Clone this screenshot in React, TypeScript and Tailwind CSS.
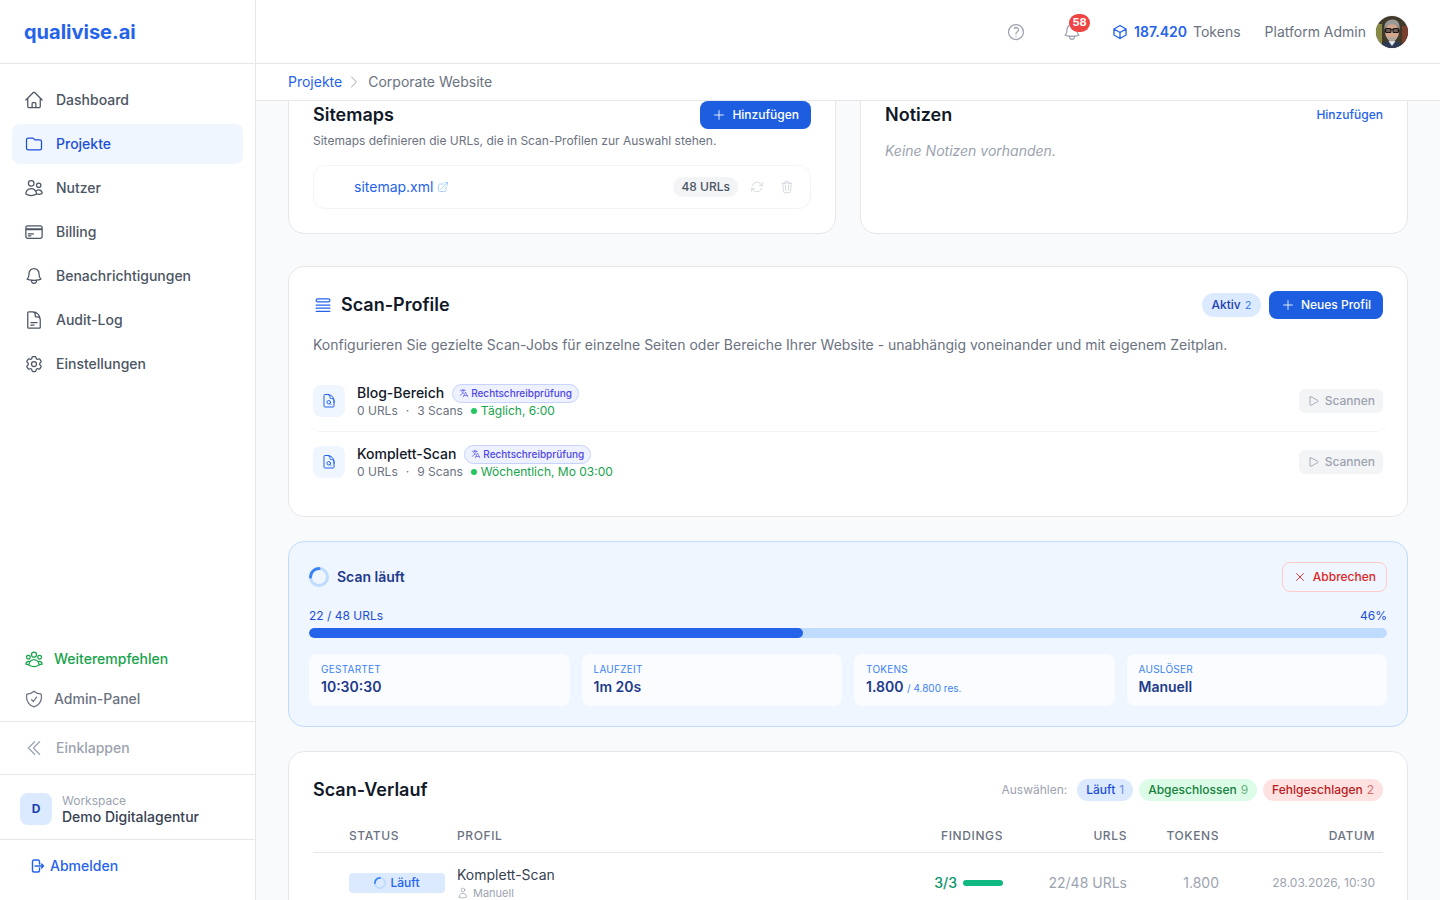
import type { ComponentType, ReactNode } from "react";
import {
  HiOutlineArrowPath,
  HiOutlineArrowRightStartOnRectangle,
  HiOutlineArrowTopRightOnSquare,
  HiOutlineBell,
  HiOutlineChevronDoubleLeft,
  HiOutlineChevronRight,
  HiOutlineCog6Tooth,
  HiOutlineCreditCard,
  HiOutlineCube,
  HiOutlineDocumentMagnifyingGlass,
  HiOutlineDocumentText,
  HiOutlineHome,
  HiOutlineLanguage,
  HiOutlinePlay,
  HiOutlinePlus,
  HiOutlineQuestionMarkCircle,
  HiOutlineQueueList,
  HiOutlineShieldCheck,
  HiOutlineTrash,
  HiOutlineUser,
  HiOutlineUserGroup,
  HiOutlineUsers,
  HiOutlineXMark,
} from "react-icons/hi2";

type NavItem = {
  label: string;
  icon: ComponentType<{ className?: string }>;
  active?: boolean;
};

const FolderIcon = ({ className }: { className?: string }) => (
  <svg viewBox="0 0 24 24" fill="none" stroke="currentColor" strokeWidth="1.5" className={className}>
    <path
      strokeLinecap="round"
      strokeLinejoin="round"
      d="M3 7v10a2 2 0 0 0 2 2h14a2 2 0 0 0 2-2V9a2 2 0 0 0-2-2h-6l-2-2H5a2 2 0 0 0-2 2z"
    />
  </svg>
);

const navItems: NavItem[] = [
  { label: "Dashboard", icon: HiOutlineHome },
  { label: "Projekte", icon: FolderIcon, active: true },
  { label: "Nutzer", icon: HiOutlineUsers },
  { label: "Billing", icon: HiOutlineCreditCard },
  { label: "Benachrichtigungen", icon: HiOutlineBell },
  { label: "Audit-Log", icon: HiOutlineDocumentText },
  { label: "Einstellungen", icon: HiOutlineCog6Tooth },
];

const profiles = [
  { name: "Blog-Bereich", scans: "3 Scans", schedule: "Täglich, 6:00" },
  { name: "Komplett-Scan", scans: "9 Scans", schedule: "Wöchentlich, Mo 03:00" },
];

const Spinner = ({ className }: { className: string }) => (
  <svg viewBox="0 0 20 20" fill="none" className={className}>
    <circle cx="10" cy="10" r="8.5" stroke="#bfdbfe" strokeWidth="3" />
    <path
      d="M1.5 10A8.5 8.5 0 0 1 10 1.5"
      stroke="#3b82f6"
      strokeWidth="3"
      strokeLinecap="round"
    />
  </svg>
);

const Avatar = () => (
  <svg viewBox="0 0 32 32" className="h-8 w-8 rounded-full ring-1 ring-gray-100">
    <rect width="32" height="32" fill="#3f3a2a" />
    <rect x="0" y="8" width="6" height="24" fill="#8a8a48" />
    <rect x="26" y="10" width="6" height="22" fill="#7a3f2c" />
    <path d="M4 32c1-5 6-7 12-7s11 2 12 7z" fill="#2f3a52" />
    <path d="M12.500 25l3.500 5 3.500-5z" fill="#e6ebf2" />
    <ellipse cx="16" cy="16" rx="7" ry="9" fill="#d3a68b" />
    <path d="M8.500 14C7.500 7 11.500 3.500 16.500 3.500S24.500 7 23.500 14c-.8-3.500-3-5.500-7.500-5.500S9.300 10.500 8.500 14z" fill="#9a9a98" />
    <path d="M10.500 20c1 4 3 5.500 5.500 5.500s4.500-1.500 5.500-5.500c-2 1.500-9 1.500-11 0z" fill="#b3a79c" />
    <rect x="9.500" y="12.500" width="5.500" height="4" rx="1" fill="#6b5a50" stroke="#17171c" strokeWidth="1.100" />
    <rect x="17" y="12.500" width="5.500" height="4" rx="1" fill="#6b5a50" stroke="#17171c" strokeWidth="1.100" />
    <path d="M15 13.500h2" stroke="#17171c" strokeWidth="1" />
  </svg>
);

const Card = ({ children }: { children: ReactNode }) => (
  <section className="rounded-2xl border border-[#e5e7eb] bg-white p-6">{children}</section>
);

const PrimaryButton = ({ label }: { label: string }) => (
  <button className="flex h-7 items-center gap-1.5 rounded-lg bg-[#1d5ee0] px-3 text-xs font-medium text-white">
    <HiOutlinePlus className="h-3.5 w-3.5" />
    {label}
  </button>
);

const Stat = ({ label, children }: { label: string; children: ReactNode }) => (
  <div className="rounded-lg bg-white/70 px-3 pb-[9px] pt-[7px]">
    <div className="text-[10px] leading-4 uppercase tracking-[0.025em] text-[#3b82f6]">{label}</div>
    <div className="h-5 text-sm leading-5 font-semibold text-[#1e3a8a]">{children}</div>
  </div>
);

const verlaufGrid = "grid grid-cols-[36px_108px_1fr_100px_124px_92px_164px]";

export default function App() {
  return (
    <div className="flex h-screen w-full overflow-hidden bg-[#f9fafb] font-['Inter',sans-serif] text-[#111827]">
      <aside className="flex w-64 shrink-0 flex-col border-r border-[#e5e7eb] bg-white">
        <div className="flex h-16 shrink-0 items-center border-b border-[#e5e7eb] px-6">
          <span className="text-xl font-bold text-[#2563eb]">qualivise.ai</span>
        </div>

        <nav className="flex flex-1 flex-col gap-1 px-3 py-4">
          {navItems.map((item) => (
            <div
              key={item.label}
              className={
                item.active
                  ? "flex h-10 items-center gap-3 rounded-lg bg-[#eff6ff] px-3 text-sm font-medium text-[#1d4ed8]"
                  : "flex h-10 items-center gap-3 rounded-lg px-3 text-sm font-medium text-[#4b5563]"
              }
            >
              <item.icon className="h-5 w-5" />
              {item.label}
            </div>
          ))}
        </nav>

        <div className="border-b border-[#e5e7eb] px-6 pb-0.5">
          <div className="flex h-10 items-center gap-2.5 text-sm font-medium text-[#16a34a]">
            <HiOutlineUserGroup className="h-5 w-5" />
            Weiterempfehlen
          </div>
          <div className="flex h-10 items-center gap-2.5 text-sm font-medium text-[#6b7280]">
            <HiOutlineShieldCheck className="h-5 w-5" />
            Admin-Panel
          </div>
        </div>
        <div className="flex h-[53px] items-center gap-3 border-b border-[#e5e7eb] px-6 text-sm font-medium text-[#9ca3af]">
          <HiOutlineChevronDoubleLeft className="h-5 w-5" />
          Einklappen
        </div>
        <div className="flex h-[65px] items-center gap-2.5 border-b border-[#e5e7eb] px-5 pt-1">
          <div className="flex h-8 w-8 items-center justify-center rounded-lg bg-[#dbeafe] text-xs font-bold text-[#1e40af]">
            D
          </div>
          <div>
            <div className="text-xs leading-4 text-[#9ca3af]">Workspace</div>
            <div className="text-sm leading-4 font-medium text-[#374151]">Demo Digitalagentur</div>
          </div>
        </div>
        <div className="flex h-[60px] items-center gap-[5px] px-[29px] pb-2 text-sm font-medium text-[#2563eb]">
          <HiOutlineArrowRightStartOnRectangle className="h-4 w-4 stroke-[2.2]" />
          Abmelden
        </div>
      </aside>

      <div className="flex min-w-0 flex-1 flex-col">
        <header className="flex h-16 shrink-0 items-center justify-end border-b border-[#e5e7eb] bg-white px-8">
          <HiOutlineQuestionMarkCircle className="h-5 w-5 text-[#9ca3af]" />
          <div className="relative ml-9 mr-[30px]">
            <HiOutlineBell className="h-5 w-5 text-[#9ca3af]" />
            <span className="absolute -right-[8px] -top-[8px] flex h-[18px] w-[21px] items-center justify-center rounded-full bg-[#ef4444] text-[11px] font-bold text-white">
              58
            </span>
          </div>
          <div className="flex items-center gap-1.5 text-sm">
            <HiOutlineCube className="h-4 w-4 stroke-2 text-[#2563eb]" />
            <span className="font-semibold text-[#2563eb]">187.420</span>
            <span className="text-[#6b7280]">Tokens</span>
          </div>
          <span className="ml-6 text-sm text-[#6b7280]">Platform Admin</span>
          <div className="ml-2.5">
            <Avatar />
          </div>
        </header>

        <div className="relative z-10 flex h-[37px] shrink-0 items-center border-b border-[#e5e7eb] bg-white px-8 text-sm">
          <span className="text-[#2563eb]">Projekte</span>
          <HiOutlineChevronRight className="ml-1 mr-1.5 h-4 w-4 text-[#9ca3af]" />
          <span className="text-[#6b7280]">Corporate Website</span>
        </div>

        <main className="min-h-0 flex-1 overflow-hidden px-8">
          <div className="-mt-[25px] grid grid-cols-2 gap-6">
            <Card>
              <div className="flex items-center justify-between">
                <h2 className="text-lg font-semibold">Sitemaps</h2>
                <PrimaryButton label="Hinzufügen" />
              </div>
              <p className="mt-1 text-xs text-[#6b7280]">
                Sitemaps definieren die URLs, die in Scan-Profilen zur Auswahl stehen.
              </p>
              <div className="mt-4 flex h-11 items-center rounded-xl border border-[#f3f4f6] pl-10 pr-4">
                <span className="text-sm text-[#2563eb]">sitemap.xml</span>
                <HiOutlineArrowTopRightOnSquare className="ml-1 h-3 w-3 text-[#93c5fd]" />
                <span className="ml-auto rounded-full bg-[#f3f4f6] px-2 py-0.5 text-xs font-medium text-[#4b5563]">
                  48 URLs
                </span>
                <HiOutlineArrowPath className="ml-3 h-3.5 w-3.5 text-[#d1d5db]" />
                <HiOutlineTrash className="ml-4 h-3.5 w-3.5 text-[#d1d5db]" />
              </div>
            </Card>

            <Card>
              <div className="flex h-7 items-center justify-between">
                <h2 className="text-lg font-semibold">Notizen</h2>
                <span className="text-xs font-medium text-[#2563eb]">Hinzufügen</span>
              </div>
              <p className="mt-3 text-sm italic text-[#9ca3af]">Keine Notizen vorhanden.</p>
            </Card>
          </div>

          <div className="mt-8">
            <Card>
              <div className="flex items-center justify-between">
                <div className="flex items-center gap-2">
                  <HiOutlineQueueList className="h-5 w-5 text-[#2563eb]" />
                  <h2 className="text-lg font-semibold">Scan-Profile</h2>
                </div>
                <div className="flex items-center gap-2">
                  <span className="flex h-6 w-[59px] items-center justify-center gap-1 rounded-full bg-[#dbeafe] text-xs font-medium text-[#1e40af]">
                    Aktiv <span className="text-[11px] font-normal text-[#3b82f6]">2</span>
                  </span>
                  <PrimaryButton label="Neues Profil" />
                </div>
              </div>
              <p className="mt-4 text-sm text-[#6b7280]">
                Konfigurieren Sie gezielte Scan-Jobs für einzelne Seiten oder Bereiche Ihrer Website - unabhängig voneinander und mit eigenem Zeitplan.
              </p>
              <div className="mt-4">
                {profiles.map((profile, index) => (
                  <div
                    key={profile.name}
                    className={
                      index === 0
                        ? "-mx-1 flex items-center rounded-xl border-b border-[#f3f4f6] px-1 py-3"
                        : "-mx-1 flex items-center px-1 pb-3 pt-3"
                    }
                  >
                    <div className="flex h-8 w-8 items-center justify-center rounded-lg bg-[#eff6ff]">
                      <HiOutlineDocumentMagnifyingGlass className="h-4 w-4 text-[#2563eb]" />
                    </div>
                    <div className="ml-3">
                      <div className="flex h-5 items-center gap-2">
                        <span className="text-sm font-medium text-[#111827]">{profile.name}</span>
                        <span className="flex h-[19px] items-center gap-0.5 rounded-full border border-[#c7d2fe] bg-[#eef2ff] px-1.5 text-[10px] font-medium text-[#4f46e5]">
                          <HiOutlineLanguage className="h-2.5 w-2.5" />
                          Rechtschreibprüfung
                        </span>
                      </div>
                      <div className="flex h-4 items-center text-xs text-[#6b7280]">
                        <span>0 URLs</span>
                        <span className="mx-2">·</span>
                        <span>{profile.scans}</span>
                        <span className="ml-2 h-1.5 w-1.5 rounded-full bg-[#22c55e]" />
                        <span className="ml-1 text-[#16a34a]">{profile.schedule}</span>
                      </div>
                    </div>
                    <button className="ml-auto flex h-6 items-center gap-1 rounded-md bg-[#f3f4f6] px-2 text-xs font-medium text-[#9ca3af]">
                      <HiOutlinePlay className="h-3.5 w-3.5" />
                      Scannen
                    </button>
                  </div>
                ))}
              </div>
            </Card>
          </div>

          <section className="mt-6 rounded-2xl border border-[#bfdbfe] bg-[#eff6ff] p-5">
            <div className="flex items-center justify-between">
              <div className="flex items-center gap-2">
                <Spinner className="h-5 w-5" />
                <span className="text-sm font-semibold text-[#1e3a8a]">Scan läuft</span>
              </div>
              <button className="flex h-[30px] items-center gap-1.5 rounded-lg border border-[#fecaca] px-2.5 text-xs font-medium text-[#dc2626]">
                <HiOutlineXMark className="h-3.5 w-3.5" />
                Abbrechen
              </button>
            </div>
            <div className="mt-4 flex justify-between text-xs text-[#1d4ed8]">
              <span>22 / 48 URLs</span>
              <span>46%</span>
            </div>
            <div className="mt-1 h-2.5 overflow-hidden rounded-full bg-[#bfdbfe]">
              <div className="h-full rounded-full bg-[#2563eb]" style={{ width: "45.8%" }} />
            </div>
            <div className="mt-4 grid grid-cols-4 gap-3">
              <Stat label="Gestartet">10:30:30</Stat>
              <Stat label="Laufzeit">1m 20s</Stat>
              <Stat label="Tokens">
                1.800 <span className="text-[10px] leading-none font-normal text-[#3b82f6]">/ 4.800 res.</span>
              </Stat>
              <Stat label="Auslöser">Manuell</Stat>
            </div>
          </section>

          <div className="mt-6">
            <Card>
              <div className="flex items-center justify-between">
                <h2 className="text-lg font-semibold">Scan-Verlauf</h2>
                <div className="flex items-center gap-1.5 text-xs">
                  <span className="mr-1 text-[#9ca3af]">Auswählen:</span>
                  <span className="flex h-[22px] items-center gap-1 rounded-full bg-[#dbeafe] px-[9px] font-medium text-[#1d4ed8]">
                    Läuft <span className="font-normal opacity-60">1</span>
                  </span>
                  <span className="flex h-[22px] items-center gap-1 rounded-full bg-[#dcfce7] px-[9px] font-medium text-[#15803d]">
                    Abgeschlossen <span className="font-normal opacity-60">9</span>
                  </span>
                  <span className="flex h-[22px] items-center gap-1 rounded-full bg-[#fee2e2] px-[9px] font-medium text-[#b91c1c]">
                    Fehlgeschlagen <span className="font-normal opacity-60">2</span>
                  </span>
                </div>
              </div>

              <div className={`${verlaufGrid} mt-6 border-b border-[#e5e7eb] pb-2 text-xs font-medium uppercase tracking-wider text-[#6b7280]`}>
                <span />
                <span>Status</span>
                <span>Profil</span>
                <span className="text-right">Findings</span>
                <span className="text-right">URLs</span>
                <span className="text-right">Tokens</span>
                <span className="pr-2 text-right">Datum</span>
              </div>

              <div className={`${verlaufGrid} items-center py-3`}>
                <span />
                <span className="flex h-5 w-24 items-center justify-center gap-1 rounded bg-[#dbeafe] text-xs font-medium text-[#2563eb]">
                  <Spinner className="h-3 w-3" />
                  Läuft
                </span>
                <div>
                  <div className="text-sm text-[#374151]">Komplett-Scan</div>
                  <div className="flex items-center gap-1 text-[11px] leading-4 text-[#9ca3af]">
                    <HiOutlineUser className="h-3 w-3" />
                    Manuell
                  </div>
                </div>
                <div className="flex items-center justify-end gap-1.5">
                  <span className="text-sm font-medium text-[#059669]">3/3</span>
                  <span className="h-1.5 w-10 rounded-full bg-[#10b981]" />
                </div>
                <span className="text-right text-sm text-[#9ca3af]">22/48 URLs</span>
                <span className="text-right text-sm text-[#9ca3af]">1.800</span>
                <span className="pr-2 text-right text-xs text-[#9ca3af]">28.03.2026, 10:30</span>
              </div>
            </Card>
          </div>
        </main>
      </div>
    </div>
  );
}
